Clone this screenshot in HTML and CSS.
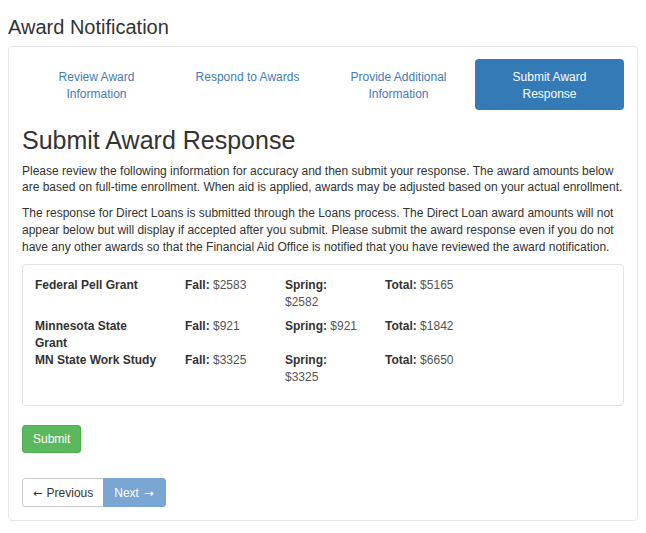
FILE: index.html
```html
<!DOCTYPE html>
<html lang="en">

<head>
    <meta charset="UTF-8" />
    <title>Award Notification</title>
    <link rel="stylesheet" href="styles.css">
</head>

<body>
    <h1 class="page-title">Award Notification</h1>

    <div class="panel">
        <ul class="steps">
            <li class="step"><a href="#">Review Award Information</a></li>
            <li class="step"><a href="#">Respond to Awards</a></li>
            <li class="step"><a href="#">Provide Additional Information</a></li>
            <li class="step active"><a href="#">Submit Award Response</a></li>
        </ul>

        <h2 class="section-title">Submit Award Response</h2>

        <p>Please review the following information for accuracy and then submit your response. The award amounts below
            are based on full-time enrollment. When aid is applied, awards may be adjusted based on your actual enrollment.</p>

        <p>The response for Direct Loans is submitted through the Loans process. The Direct Loan award amounts will not
            appear below but will display if accepted after you submit. Please submit the award response even if you do not
            have any other awards so that the Financial Aid Office is notified that you have reviewed the award notification.</p>

        <div class="well">
            <div class="award-row">
                <div class="award-name">Federal Pell Grant</div>
                <div class="amount"><b>Fall:</b> $2583</div>
                <div class="amount"><b>Spring:</b> $2582</div>
                <div class="amount"><b>Total:</b> $5165</div>
            </div>
            <div class="award-row">
                <div class="award-name">Minnesota State Grant</div>
                <div class="amount"><b>Fall:</b> $921</div>
                <div class="amount"><b>Spring:</b> $921</div>
                <div class="amount"><b>Total:</b> $1842</div>
            </div>
            <div class="award-row">
                <div class="award-name">MN State Work Study</div>
                <div class="amount"><b>Fall:</b> $3325</div>
                <div class="amount"><b>Spring:</b> $3325</div>
                <div class="amount"><b>Total:</b> $6650</div>
            </div>
        </div>

        <button class="btn btn-success">Submit</button>

        <div class="pager">
            <button class="btn btn-default"><span class="arrow arrow-left">&larr;</span> Previous</button>
            <button class="btn btn-primary" disabled>Next <span class="arrow arrow-right">&rarr;</span></button>
        </div>
    </div>
</body>

</html>
```

FILE: styles.css
```css
/* Page base */
body {
    margin: 0;
    padding: 0 8px;
    font-family: 'Liberation Sans', Arial, sans-serif;
    font-size: 12px;
    line-height: 1.4;
    color: #333;
    background: #fff;
}

.page-title {
    margin: 16px 0 8px 0;
    font-size: 20px;
    font-weight: 400;
    line-height: 22px;
}

/* Outer panel */
.panel {
    border: 1px solid #e8e8e8;
    border-radius: 4px;
    padding: 12px 13px 13px 13px;
}

/* Step pills */
.steps {
    list-style: none;
    margin: 0;
    padding: 0;
    display: flex;
    gap: 2px;
}

.step {
    flex: 1;
}

.step a {
    display: block;
    padding: 10px 10px 7px 10px;
    line-height: 17px;
    text-align: center;
    color: #3f7cb8;
    text-decoration: none;
    border-radius: 4px;
}

.step.active a {
    background: #337ab7;
    color: #fff;
}

.section-title {
    margin: 17px 0 8px 0;
    font-size: 25px;
    font-weight: 400;
    line-height: 1.1;
}

p {
    margin: 0 0 9px 0;
}

/* Award summary */
.well {
    margin-top: 8px;
    border: 1px solid #e3e3e3;
    border-radius: 4px;
    padding: 12px;
    line-height: 17px;
}

.award-row {
    display: flex;
    align-items: flex-start;
}

.award-name {
    width: 125px;
    padding-right: 25px;
    font-weight: 700;
}

.amount {
    width: 75px;
    padding-right: 25px;
    padding-bottom: 7px;
    color: #555;
}

.amount b {
    color: #333;
}

/* Buttons */
.btn {
    font-family: inherit;
    font-size: 12px;
    line-height: 18px;
    padding: 4px 10px;
    border: 1px solid transparent;
    border-radius: 3px;
    cursor: pointer;
}

.btn-success {
    margin-top: 19px;
    background: #5cb85c;
    border-color: #4cae4c;
    color: #fff;
}

.pager {
    margin-top: 25px;
    display: flex;
}

.pager .btn {
    padding: 5px 10px 4px 10px;
}

.arrow {
    font-family: 'DejaVu Sans', sans-serif;
    font-size: 11px;
    line-height: 1;
}

.arrow-left {
    margin-right: 1px;
}

.arrow-right {
    margin-left: 2px;
    margin-right: 2px;
}

.btn-default {
    background: #fff;
    border-color: #ccc;
    color: #333;
    border-radius: 3px 0 0 3px;
}

.btn-primary {
    background: #7aa6d3;
    border-color: #7aa6d3;
    color: #fff;
    border-radius: 0 3px 3px 0;
    margin-left: -1px;
    cursor: not-allowed;
}
```
